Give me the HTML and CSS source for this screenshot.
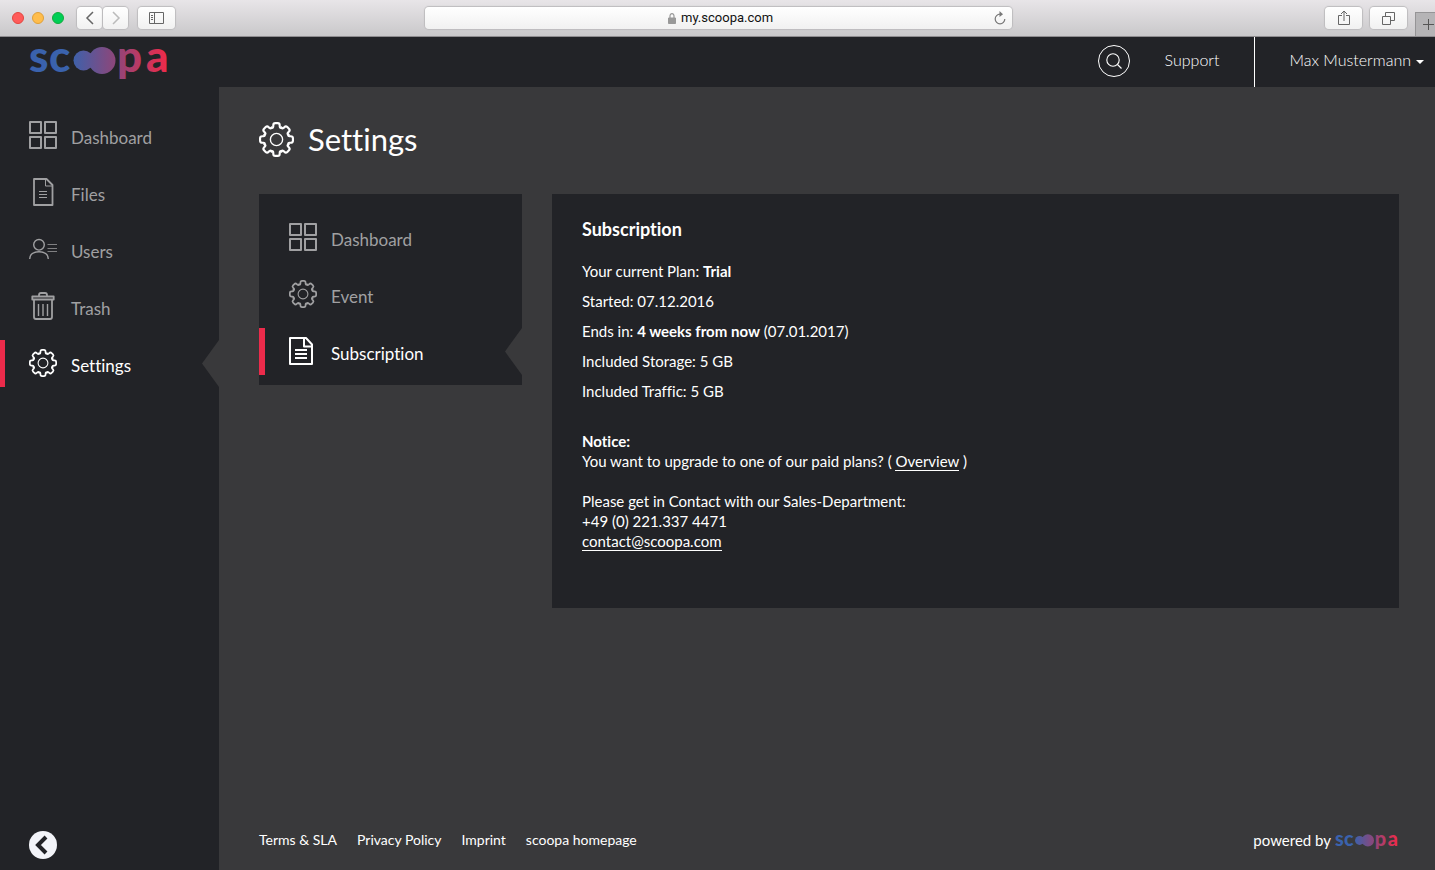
FILE: index.html
```html
<!DOCTYPE html>
<html lang="en">
<head>
<meta charset="utf-8">
<meta name="viewport" content="width=device-width, initial-scale=1">
<title>Settings - scoopa</title>
<link rel="stylesheet" href="styles.css">
</head>
<body>
<svg class="defs" aria-hidden="true">
  <defs>
    <linearGradient id="brand" gradientUnits="userSpaceOnUse" x1="0" y1="0" x2="140" y2="0">
      <stop offset="0.3" stop-color="#3a62ad"/>
      <stop offset="0.58" stop-color="#84497f"/>
      <stop offset="0.98" stop-color="#ec2b4b"/>
    </linearGradient>
    <symbol id="logo" viewBox="0 0 142 34">
      <g fill="url(#brand)">
        <circle cx="54.500" cy="13.500" r="10"/>
        <circle cx="73" cy="13.500" r="13.500"/>
        <path d="M60 5.500Q63 8 65 5v17Q63 19 60 21.500z"/>
        <text class="logo-text" y="25" x="0 20">sc</text>
        <text class="logo-text" y="25" x="88 117">pa</text>
      </g>
    </symbol>
    <symbol id="grid" viewBox="0 0 28 28">
      <g fill="none" stroke="currentColor" stroke-width="2" stroke-linejoin="round">
        <path d="M1 1h11v11H1zM16 1h11v11H16zM1 16h11v11H1zM16 16h11v11H16z"/>
      </g>
    </symbol>
    <symbol id="file" viewBox="0 0 28 28">
      <path d="M5 1h12.500l6 6v20H5z" fill="none" stroke="currentColor" stroke-width="1.800" stroke-linejoin="round"/>
      <path d="M16.500 1.500V8h6.500M10 13.500h8M10 16.500h8M10 19.500h8" fill="none" stroke="currentColor"/>
    </symbol>
    <symbol id="document" viewBox="0 0 28 28">
      <path d="M1 1h16l6 6.500V27H1zM15 1v8.500h8" fill="none" stroke="currentColor" stroke-width="2" stroke-linejoin="round"/>
      <path d="M6 13h12M6 17h12M6 21h12" fill="none" stroke="currentColor" stroke-width="2"/>
    </symbol>
    <symbol id="users" viewBox="0 0 28 28">
      <g fill="none" stroke="currentColor" stroke-width="1.400">
        <circle cx="10" cy="9.800" r="5.300"/>
        <path d="M.7 24c0-4.800 4-7.200 9.300-7.200s9.300 2.400 9.300 7.200"/>
        <path d="M18.500 9.500H28M18.500 13.500H28M18.500 16.500H28" stroke-width="1" opacity=".75"/>
      </g>
    </symbol>
    <symbol id="trash" viewBox="0 0 28 28">
      <g fill="none" stroke="currentColor" stroke-width="1.800" stroke-linejoin="round">
        <path d="M3.300 4.500h21.400v3H3.300zM10 4.500V3q0-2 2-2h4q2 0 2 2v1.500M5 7.500V25q0 2 2 2h14q2 0 2-2V7.500"/>
        <path d="M9.500 12v12M14 12v12M18.500 12v12" stroke-width="1.400"/>
      </g>
    </symbol>
    <path id="tooth" d="M-5.100-12.300C-4-11.600-3.400-12.400-3.300-13.600V-14.600C-3.300-16.200-2.500-16.900-1.200-16.900H1.200C2.500-16.900 3.300-16.200 3.300-14.600V-13.600C3.400-12.400 4-11.600 5.100-12.300"/>
    <symbol id="gear" viewBox="0 0 36 36">
      <g transform="translate(18 18)" fill="none" stroke="currentColor" stroke-width="2.200" stroke-linecap="round">
        <use href="#tooth"/>
        <use href="#tooth" transform="rotate(45)"/>
        <use href="#tooth" transform="rotate(90)"/>
        <use href="#tooth" transform="rotate(135)"/>
        <use href="#tooth" transform="rotate(180)"/>
        <use href="#tooth" transform="rotate(225)"/>
        <use href="#tooth" transform="rotate(270)"/>
        <use href="#tooth" transform="rotate(315)"/>
        <circle r="6.300" stroke-width="1.400"/>
      </g>
    </symbol>
  </defs>
</svg>

<div class="browser">
  <div class="browser-side">
    <span class="light red"></span><span class="light amber"></span><span class="light green"></span>
    <div class="history">
      <button class="tool narrow" type="button" aria-label="Back"><svg width="10" height="14" viewBox="0 0 10 14"><path d="M8 1 2 7l6 6" fill="none" stroke="#666" stroke-width="1.500"/></svg></button>
      <button class="tool narrow" type="button" aria-label="Forward"><svg width="10" height="14" viewBox="0 0 10 14"><path d="m2 1 6 6-6 6" fill="none" stroke="#bbb" stroke-width="1.500"/></svg></button>
    </div>
    <button class="tool" type="button" aria-label="Show sidebar"><svg width="15" height="12" viewBox="0 0 15 12"><path d="M.5.500h14v11H.5zM5.500.500v11M2 3.500h2M2 5.500h2M2 7.500h2" fill="none" stroke="#666"/></svg></button>
  </div>
  <div class="address">
    <div class="address-text">
      <svg width="8" height="11" viewBox="0 0 8 11"><path d="M.5 5h7v5.500h-7z" fill="#999" stroke="#999"/><path d="M2 5V3q0-2.300 2-2.300T6 3v2" fill="none" stroke="#999" stroke-width="1.200"/></svg>
      <input class="url" type="text" value="my.scoopa.com" aria-label="Address">
    </div>
    <button class="reload" type="button" aria-label="Reload"><svg width="12" height="14" viewBox="0 0 12 14"><path d="M6 3.200A4.800 4.800 0 1 0 10.800 8" fill="none" stroke="#777" stroke-width="1.200"/><path d="M5.500 0 9 3.200 5.500 6z" fill="#777"/></svg></button>
  </div>
  <div class="browser-side end">
    <button class="tool" type="button" aria-label="Share"><svg width="12" height="16" viewBox="0 0 12 16"><path d="M4 5.500H.5v9h11v-9H8M6 11V1M3 4l3-3 3 3" fill="none" stroke="#666"/></svg></button>
    <button class="tool" type="button" aria-label="Show tabs"><svg width="13" height="13" viewBox="0 0 13 13"><path d="M.5 4.500h8v8h-8zM3.500 4V.500h9v8H9" fill="none" stroke="#666"/></svg></button>
    <button class="new-tab" type="button" aria-label="New tab"><svg width="12" height="11" viewBox="0 0 12 11"><path d="M0 5.500h11M5.500 0v11" stroke="#555"/></svg></button>
  </div>
</div>

<header class="header">
  <a class="brand" href="#" aria-label="scoopa"><svg class="logo"><use href="#logo"/></svg></a>
  <nav class="header-nav">
    <button class="search" type="button" aria-label="Search"><svg width="16" height="16" viewBox="0 0 16 16"><circle cx="7" cy="7" r="6.200" fill="none" stroke="currentColor" stroke-width="1.100"/><path d="m11.500 11.500 4 4" stroke="currentColor" stroke-width="1.100"/></svg></button>
    <a class="support" href="#">Support</a>
    <button class="account" type="button">Max Mustermann<span class="caret"></span></button>
  </nav>
</header>

<div class="app">
  <aside class="sidebar">
    <nav class="menu">
      <a class="item" href="#"><svg class="icon"><use href="#grid"/></svg><span class="label">Dashboard</span></a>
      <a class="item" href="#"><svg class="icon"><use href="#file"/></svg><span class="label">Files</span></a>
      <a class="item" href="#"><svg class="icon"><use href="#users"/></svg><span class="label">Users</span></a>
      <a class="item" href="#"><svg class="icon"><use href="#trash"/></svg><span class="label">Trash</span></a>
      <a class="item active" href="#"><svg class="icon"><use href="#gear"/></svg><span class="label">Settings</span></a>
    </nav>
    <button class="collapse" type="button" aria-label="Collapse menu"><svg width="28" height="28" viewBox="0 0 28 28"><circle cx="14" cy="14" r="14" fill="#f3f4f9"/><path d="m17 6-8 8 8 8" fill="none" stroke="#222327" stroke-width="4"/></svg></button>
  </aside>

  <div class="page">
    <main class="content">
      <h1 class="title"><svg class="title-icon"><use href="#gear"/></svg>Settings</h1>
      <div class="columns">
        <nav class="menu submenu">
          <a class="item" href="#"><svg class="icon"><use href="#grid"/></svg><span class="label">Dashboard</span></a>
          <a class="item" href="#"><svg class="icon"><use href="#gear"/></svg><span class="label">Event</span></a>
          <a class="item active" href="#"><svg class="icon"><use href="#document"/></svg><span class="label">Subscription</span></a>
        </nav>
        <section class="panel">
          <h2 class="panel-title">Subscription</h2>
          <div class="facts">
            <p>Your current Plan: <strong>Trial</strong></p>
            <p>Started: 07.12.2016</p>
            <p>Ends in: <strong>4 weeks from now</strong> (07.01.2017)</p>
            <p>Included Storage: 5 GB</p>
            <p>Included Traffic: 5 GB</p>
          </div>
          <div class="notice">
            <p><strong>Notice:</strong><br>You want to upgrade to one of our paid plans? ( <a class="link" href="#">Overview</a> )</p>
            <p>Please get in Contact with our Sales-Department:<br>+49 (0) 221.337 4471<br><a class="link" href="#">contact@scoopa.com</a></p>
          </div>
        </section>
      </div>
    </main>
    <footer class="footer">
      <nav class="footer-nav">
        <a href="#">Terms &amp; SLA</a>
        <a href="#">Privacy Policy</a>
        <a href="#">Imprint</a>
        <a href="#">scoopa homepage</a>
      </nav>
      <div class="powered">powered by <svg class="logo-small" role="img" aria-label="scoopa"><use href="#logo"/></svg></div>
    </footer>
  </div>
</div>
</body>
</html>
```

FILE: styles.css
```css
* {
  box-sizing: border-box;
}

body {
  display: flex;
  flex-direction: column;
  min-height: 100vh;
  margin: 0;
  background: #39393b;
  color: #fff;
  font: 15px/20px Lato, "Open Sans", sans-serif;
  font-variant-ligatures: none;
}

h1, h2, p {
  margin: 0;
}

a {
  color: inherit;
  text-decoration: none;
}

button {
  padding: 0;
  border: 0;
  background: none;
  color: inherit;
  font: inherit;
}

svg {
  display: block;
  flex: none;
}

.defs {
  position: absolute;
  width: 0;
  height: 0;
}

/* Browser toolbar */

.browser {
  display: grid;
  grid-template-columns: 1fr 41% 1fr;
  align-items: center;
  height: 37px;
  padding-left: 2px;
  border-bottom: 1px solid #8e8c8f;
  background: linear-gradient(#e8e5e8, #c9c8ca);
}

.browser-side {
  display: flex;
  align-items: center;
  gap: 8px;
  height: 36px;
  padding-left: 10px;
}

.browser-side.end {
  justify-content: flex-end;
  padding-left: 0;
}

.light {
  width: 12px;
  height: 12px;
  border: 1px solid #e2463f;
  border-radius: 50%;
  background: #ff5b5a;
}

.light.amber {
  border-color: #dfa03a;
  background: #ffbd4c;
}

.light.green {
  border-color: #12ac3c;
  background: #00ce56;
}

.history {
  display: flex;
  gap: 1px;
  margin: 0 2px 0 5px;
}

.tool {
  display: flex;
  align-items: center;
  justify-content: center;
  width: 37px;
  height: 22px;
  border-radius: 4px;
  background: linear-gradient(#fff, #f1f1f1);
  box-shadow: 0 0 1px 1px #bdbcbe;
}

.tool.narrow {
  width: 25px;
}

.new-tab {
  display: flex;
  align-items: center;
  justify-content: flex-end;
  align-self: flex-end;
  width: 20px;
  height: 24px;
  border: 1px solid #959496;
  border-width: 1px 0 0 1px;
  background: #b5b4b6;
}

.address {
  display: flex;
  align-items: center;
  height: 22px;
  padding: 0 6px 0 26px;
  border-radius: 4px;
  background: linear-gradient(#fff, #f1f1f1);
  box-shadow: 0 0 1px 1px #bdbcbe;
}

.address-text {
  display: flex;
  flex: 1;
  align-items: center;
  justify-content: center;
  gap: 5px;
}

.url {
  width: 96px;
  padding: 0;
  border: 0;
  background: none;
  color: #111;
  font: 13px/18px Roboto, sans-serif;
}

/* App header */

.header {
  display: flex;
  justify-content: space-between;
  height: 50px;
  background: #222327;
}

.brand {
  padding: 10px 0 0 29px;
}

.logo {
  width: 142px;
  height: 34px;
}

.logo-text {
  font: 900 44px Lato, sans-serif;
}

.header-nav {
  display: flex;
  align-items: center;
  color: #fff;
  font-size: 16px;
  font-weight: 300;
}

.search {
  display: flex;
  align-items: center;
  justify-content: center;
  width: 32px;
  height: 32px;
  margin-bottom: 2px;
  border: 1px solid #fff;
  border-radius: 50%;
}

.support {
  padding: 0 35px 4px;
}

.account {
  display: flex;
  align-items: center;
  gap: 5px;
  height: 50px;
  padding: 0 11px 4px 34px;
  border-left: 1px solid #fff;
}

.caret {
  margin-top: 4px;
  border: 4px solid transparent;
  border-top-color: #fff;
  border-bottom: 0;
}

/* Layout */

.app {
  display: flex;
  flex: 1;
}

.sidebar {
  display: flex;
  flex: none;
  flex-direction: column;
  justify-content: space-between;
  align-items: stretch;
  width: 219px;
  padding: 25px 0 11px;
  background: #222327;
}

.menu {
  display: flex;
  flex-direction: column;
  gap: 10px;
}

.item {
  display: flex;
  align-items: center;
  gap: 14px;
  height: 47px;
  padding-left: 24px;
  border-left: 5px solid transparent;
  color: #a0a0a2;
  font-size: 17px;
}

.item.active {
  position: relative;
  border-left-color: #ec2b4b;
  color: #fff;
}

.item.active::after {
  content: "";
  position: absolute;
  top: 0;
  right: 0;
  width: 17px;
  height: 47px;
  background: #39393b;
  clip-path: polygon(100% 0, 0 50%, 100% 100%);
}

.icon {
  width: 28px;
  height: 28px;
  margin-bottom: 2px;
}

.label {
  padding-top: 4px;
}

.collapse {
  align-self: flex-start;
  margin-left: 29px;
}

.page {
  display: flex;
  flex: 1;
  flex-direction: column;
  justify-content: space-between;
  padding: 34px 36px 20px 40px;
}

.title {
  display: flex;
  align-items: center;
  gap: 14px;
  font-size: 31px;
  font-weight: 400;
  line-height: 36px;
}

.title-icon {
  width: 35px;
  height: 35px;
}

.columns {
  display: grid;
  grid-template-columns: 263px 1fr;
  align-items: start;
  gap: 30px;
  margin-top: 37px;
}

.submenu {
  padding: 20px 0 10px;
  background: #222327;
}

.submenu .item {
  border-left-width: 6px;
}

.panel {
  padding: 25px 30px 57px;
  background: #222327;
}

.panel-title {
  font-size: 18px;
  line-height: 20px;
}

.facts {
  display: grid;
  gap: 10px;
  margin-top: 22px;
}

.notice {
  display: grid;
  gap: 20px;
  margin-top: 30px;
}

.link {
  border-bottom: 1px solid #fff;
}

.footer {
  display: flex;
  justify-content: space-between;
}

.footer-nav {
  display: flex;
  gap: 20px;
  font-size: 14px;
}

.powered {
  display: flex;
  align-items: center;
  gap: 4px;
}

.logo-small {
  width: 64px;
  height: 16px;
  margin-top: 4px;
}
```
